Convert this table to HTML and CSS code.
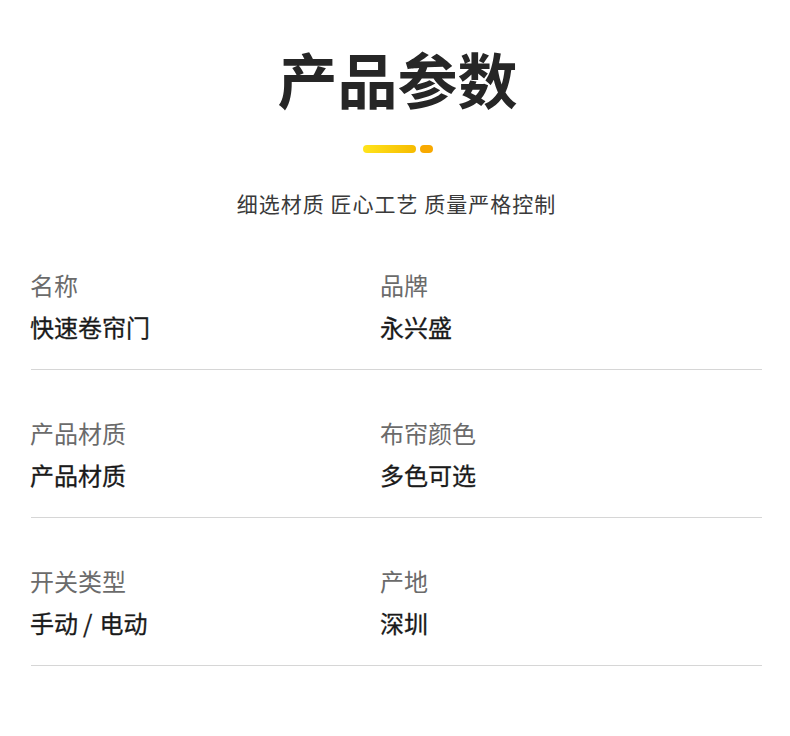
FILE: index.html
```html
<!DOCTYPE html>
<html lang="zh-CN">
<head>
<meta charset="utf-8">
<title>产品参数</title>
<link rel="stylesheet" href="styles.css">
</head>
<body>
<section class="params">
  <header class="params-head">
    <h1 class="params-title">产品参数</h1>
    <div class="params-bar"><span class="bar-long"></span><span class="bar-dot"></span></div>
    <p class="params-sub">细选材质 匠心工艺 质量严格控制</p>
  </header>
  <div class="params-list">
    <div class="params-row">
      <div class="item"><div class="label">名称</div><div class="value">快速卷帘门</div></div>
      <div class="item"><div class="label">品牌</div><div class="value">永兴盛</div></div>
    </div>
    <div class="params-row">
      <div class="item"><div class="label">产品材质</div><div class="value">产品材质</div></div>
      <div class="item"><div class="label">布帘颜色</div><div class="value">多色可选</div></div>
    </div>
    <div class="params-row">
      <div class="item"><div class="label">开关类型</div><div class="value">手动<span class="sep">/</span>电动</div></div>
      <div class="item"><div class="label">产地</div><div class="value">深圳</div></div>
    </div>
  </div>
</section>
</body>
</html>
```
FILE: styles.css
```css
* { box-sizing: border-box; }
html, body { margin: 0; padding: 0; background: #fff; }
body {
  font-family: "Noto Sans CJK SC", "Noto Sans", sans-serif;
  color: #222;
}
.params { padding: 43px 28px 0 31px; }
.params-head { text-align: center; }
.params-title {
  margin: 0;
  font-size: 60px;
  line-height: 70px;
  font-weight: 700;
  color: #262626;
  padding-left: 2px;
}
.params-bar {
  margin-top: 32px;
  display: flex;
  justify-content: center;
  gap: 4px;
  height: 8px;
  padding-left: 2px;
}
.bar-long {
  width: 53px;
  height: 8px;
  border-radius: 4px;
  background: linear-gradient(90deg, #ffe41c, #f6bb00);
}
.bar-dot {
  width: 13px;
  height: 8px;
  border-radius: 4px;
  background: #f8a900;
}
.params-sub {
  margin: 36px 0 0;
  font-size: 21px;
  line-height: 28px;
  color: #3a3a3a;
  letter-spacing: 1px;
}
.params-list { margin-top: 5px; }
.params-row {
  display: grid;
  grid-template-columns: 350px 1fr;
  padding: 48px 0 27px;
  border-bottom: 1px solid #d6d6d6;
}
.item { margin-left: -1px; }
.label {
  font-size: 24px;
  line-height: 30px;
  color: #6b6b6b;
}
.value {
  margin-top: 12px;
  font-size: 24px;
  line-height: 30px;
  font-weight: 400;
  -webkit-text-stroke: 0.3px currentColor;
  color: #1a1a1a;
}
.sep {
  display: inline-block;
  margin: 0 7px 0 5px;
  font-weight: 400;
}
```
